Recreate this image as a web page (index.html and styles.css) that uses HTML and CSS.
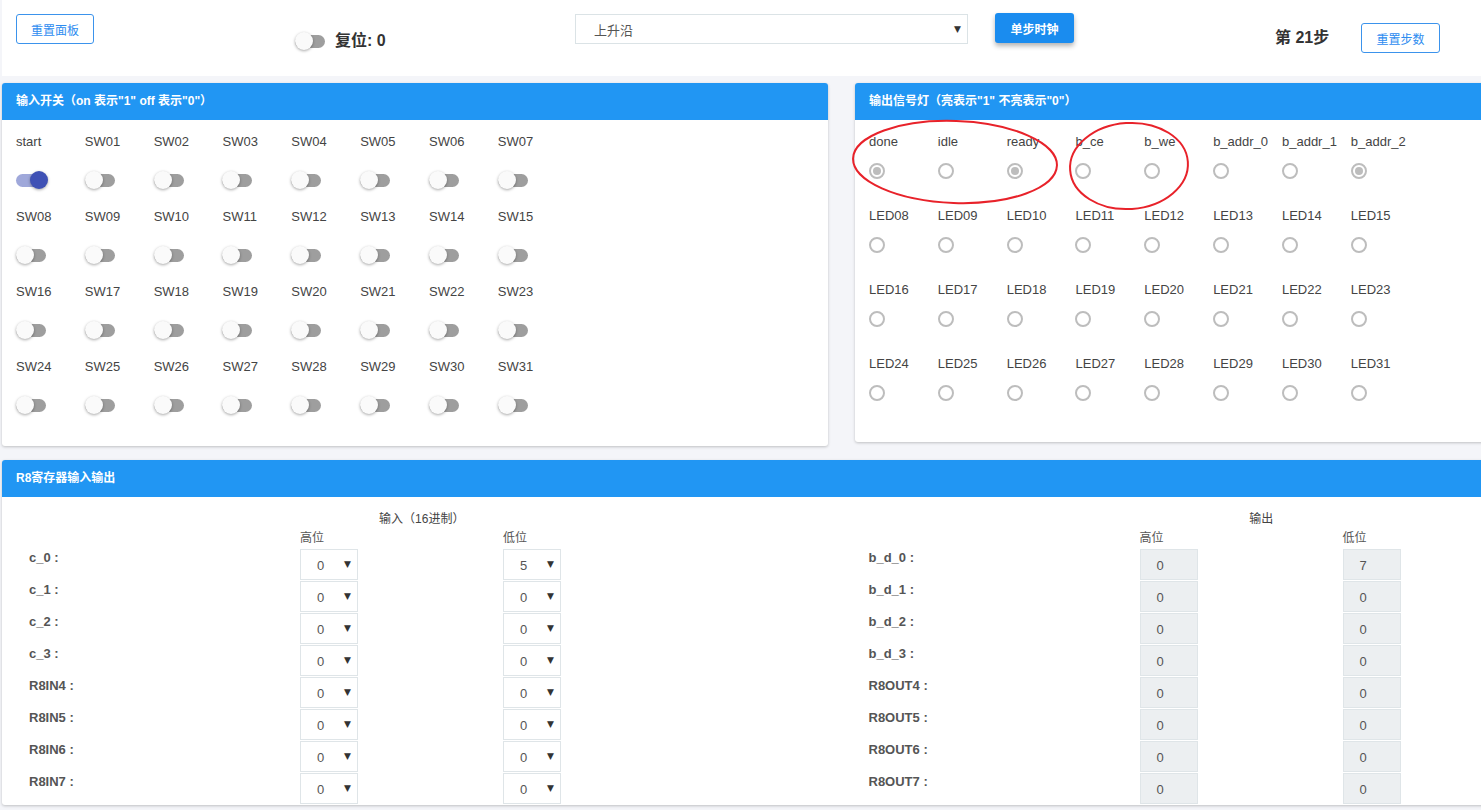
FILE: index.html
```html
<!DOCTYPE html>
<html lang="zh-CN">
<head>
<meta charset="utf-8">
<title>面板</title>
<link rel="stylesheet" href="styles.css">
</head>
<body>
<div class="page">
  <div class="topbar">
    <button class="btn-outline btn-reset-panel">重置面板</button>
    <div class="reset-group">
      <span class="sw"><i></i></span>
      <span class="reset-text">复位: 0</span>
    </div>
    <div class="top-select"><span>上升沿</span><b class="arrow">▼</b></div>
    <button class="btn-fill">单步时钟</button>
    <div class="step-text">第 21步</div>
    <button class="btn-outline btn-reset-step">重置步数</button>
  </div>

  <div class="panels">
    <section class="panel">
      <div class="panel-head">输入开关（on 表示"1" off 表示"0"）</div>
      <div class="grid sw-grid">
        <div class="cell"><span class="lbl">start</span><span class="sw on"><i></i></span></div>
        <div class="cell"><span class="lbl">SW01</span><span class="sw"><i></i></span></div>
        <div class="cell"><span class="lbl">SW02</span><span class="sw"><i></i></span></div>
        <div class="cell"><span class="lbl">SW03</span><span class="sw"><i></i></span></div>
        <div class="cell"><span class="lbl">SW04</span><span class="sw"><i></i></span></div>
        <div class="cell"><span class="lbl">SW05</span><span class="sw"><i></i></span></div>
        <div class="cell"><span class="lbl">SW06</span><span class="sw"><i></i></span></div>
        <div class="cell"><span class="lbl">SW07</span><span class="sw"><i></i></span></div>
        <div class="cell"><span class="lbl">SW08</span><span class="sw"><i></i></span></div>
        <div class="cell"><span class="lbl">SW09</span><span class="sw"><i></i></span></div>
        <div class="cell"><span class="lbl">SW10</span><span class="sw"><i></i></span></div>
        <div class="cell"><span class="lbl">SW11</span><span class="sw"><i></i></span></div>
        <div class="cell"><span class="lbl">SW12</span><span class="sw"><i></i></span></div>
        <div class="cell"><span class="lbl">SW13</span><span class="sw"><i></i></span></div>
        <div class="cell"><span class="lbl">SW14</span><span class="sw"><i></i></span></div>
        <div class="cell"><span class="lbl">SW15</span><span class="sw"><i></i></span></div>
        <div class="cell"><span class="lbl">SW16</span><span class="sw"><i></i></span></div>
        <div class="cell"><span class="lbl">SW17</span><span class="sw"><i></i></span></div>
        <div class="cell"><span class="lbl">SW18</span><span class="sw"><i></i></span></div>
        <div class="cell"><span class="lbl">SW19</span><span class="sw"><i></i></span></div>
        <div class="cell"><span class="lbl">SW20</span><span class="sw"><i></i></span></div>
        <div class="cell"><span class="lbl">SW21</span><span class="sw"><i></i></span></div>
        <div class="cell"><span class="lbl">SW22</span><span class="sw"><i></i></span></div>
        <div class="cell"><span class="lbl">SW23</span><span class="sw"><i></i></span></div>
        <div class="cell"><span class="lbl">SW24</span><span class="sw"><i></i></span></div>
        <div class="cell"><span class="lbl">SW25</span><span class="sw"><i></i></span></div>
        <div class="cell"><span class="lbl">SW26</span><span class="sw"><i></i></span></div>
        <div class="cell"><span class="lbl">SW27</span><span class="sw"><i></i></span></div>
        <div class="cell"><span class="lbl">SW28</span><span class="sw"><i></i></span></div>
        <div class="cell"><span class="lbl">SW29</span><span class="sw"><i></i></span></div>
        <div class="cell"><span class="lbl">SW30</span><span class="sw"><i></i></span></div>
        <div class="cell"><span class="lbl">SW31</span><span class="sw"><i></i></span></div>
      </div>
    </section>

    <section class="panel">
      <div class="panel-head">输出信号灯（亮表示"1" 不亮表示"0"）</div>
      <div class="grid led-grid">
        <div class="cell"><span class="lbl">done</span><span class="radio on"></span></div>
        <div class="cell"><span class="lbl">idle</span><span class="radio"></span></div>
        <div class="cell"><span class="lbl">ready</span><span class="radio on"></span></div>
        <div class="cell"><span class="lbl">b_ce</span><span class="radio"></span></div>
        <div class="cell"><span class="lbl">b_we</span><span class="radio"></span></div>
        <div class="cell"><span class="lbl">b_addr_0</span><span class="radio"></span></div>
        <div class="cell"><span class="lbl">b_addr_1</span><span class="radio"></span></div>
        <div class="cell"><span class="lbl">b_addr_2</span><span class="radio on"></span></div>
        <div class="cell"><span class="lbl">LED08</span><span class="radio"></span></div>
        <div class="cell"><span class="lbl">LED09</span><span class="radio"></span></div>
        <div class="cell"><span class="lbl">LED10</span><span class="radio"></span></div>
        <div class="cell"><span class="lbl">LED11</span><span class="radio"></span></div>
        <div class="cell"><span class="lbl">LED12</span><span class="radio"></span></div>
        <div class="cell"><span class="lbl">LED13</span><span class="radio"></span></div>
        <div class="cell"><span class="lbl">LED14</span><span class="radio"></span></div>
        <div class="cell"><span class="lbl">LED15</span><span class="radio"></span></div>
        <div class="cell"><span class="lbl">LED16</span><span class="radio"></span></div>
        <div class="cell"><span class="lbl">LED17</span><span class="radio"></span></div>
        <div class="cell"><span class="lbl">LED18</span><span class="radio"></span></div>
        <div class="cell"><span class="lbl">LED19</span><span class="radio"></span></div>
        <div class="cell"><span class="lbl">LED20</span><span class="radio"></span></div>
        <div class="cell"><span class="lbl">LED21</span><span class="radio"></span></div>
        <div class="cell"><span class="lbl">LED22</span><span class="radio"></span></div>
        <div class="cell"><span class="lbl">LED23</span><span class="radio"></span></div>
        <div class="cell"><span class="lbl">LED24</span><span class="radio"></span></div>
        <div class="cell"><span class="lbl">LED25</span><span class="radio"></span></div>
        <div class="cell"><span class="lbl">LED26</span><span class="radio"></span></div>
        <div class="cell"><span class="lbl">LED27</span><span class="radio"></span></div>
        <div class="cell"><span class="lbl">LED28</span><span class="radio"></span></div>
        <div class="cell"><span class="lbl">LED29</span><span class="radio"></span></div>
        <div class="cell"><span class="lbl">LED30</span><span class="radio"></span></div>
        <div class="cell"><span class="lbl">LED31</span><span class="radio"></span></div>
      </div>
    </section>
  </div>

  <section class="panel panel-wide">
    <div class="panel-head">R8寄存器输入输出</div>
    <div class="reg-body">
      <div class="half">
        <div class="half-title">输入（16进制）</div>
        <div class="reg-row reg-head"><span></span><span>高位</span><span></span><span>低位</span></div>
        <div class="reg-row"><span class="reg-lbl">c_0 :</span><span class="sel">0<b class="arrow">▼</b></span><span></span><span class="sel">5<b class="arrow">▼</b></span></div>
        <div class="reg-row"><span class="reg-lbl">c_1 :</span><span class="sel">0<b class="arrow">▼</b></span><span></span><span class="sel">0<b class="arrow">▼</b></span></div>
        <div class="reg-row"><span class="reg-lbl">c_2 :</span><span class="sel">0<b class="arrow">▼</b></span><span></span><span class="sel">0<b class="arrow">▼</b></span></div>
        <div class="reg-row"><span class="reg-lbl">c_3 :</span><span class="sel">0<b class="arrow">▼</b></span><span></span><span class="sel">0<b class="arrow">▼</b></span></div>
        <div class="reg-row"><span class="reg-lbl">R8IN4 :</span><span class="sel">0<b class="arrow">▼</b></span><span></span><span class="sel">0<b class="arrow">▼</b></span></div>
        <div class="reg-row"><span class="reg-lbl">R8IN5 :</span><span class="sel">0<b class="arrow">▼</b></span><span></span><span class="sel">0<b class="arrow">▼</b></span></div>
        <div class="reg-row"><span class="reg-lbl">R8IN6 :</span><span class="sel">0<b class="arrow">▼</b></span><span></span><span class="sel">0<b class="arrow">▼</b></span></div>
        <div class="reg-row"><span class="reg-lbl">R8IN7 :</span><span class="sel">0<b class="arrow">▼</b></span><span></span><span class="sel">0<b class="arrow">▼</b></span></div>
      </div>
      <div class="half">
        <div class="half-title">输出</div>
        <div class="reg-row reg-head"><span></span><span>高位</span><span></span><span>低位</span></div>
        <div class="reg-row"><span class="reg-lbl">b_d_0 :</span><span class="out">0</span><span></span><span class="out">7</span></div>
        <div class="reg-row"><span class="reg-lbl">b_d_1 :</span><span class="out">0</span><span></span><span class="out">0</span></div>
        <div class="reg-row"><span class="reg-lbl">b_d_2 :</span><span class="out">0</span><span></span><span class="out">0</span></div>
        <div class="reg-row"><span class="reg-lbl">b_d_3 :</span><span class="out">0</span><span></span><span class="out">0</span></div>
        <div class="reg-row"><span class="reg-lbl">R8OUT4 :</span><span class="out">0</span><span></span><span class="out">0</span></div>
        <div class="reg-row"><span class="reg-lbl">R8OUT5 :</span><span class="out">0</span><span></span><span class="out">0</span></div>
        <div class="reg-row"><span class="reg-lbl">R8OUT6 :</span><span class="out">0</span><span></span><span class="out">0</span></div>
        <div class="reg-row"><span class="reg-lbl">R8OUT7 :</span><span class="out">0</span><span></span><span class="out">0</span></div>
      </div>
    </div>
  </section>
</div>

<svg class="annot" width="1481" height="810" viewBox="0 0 1481 810">
  <ellipse cx="955" cy="162" rx="102" ry="41" transform="rotate(2 955 162)" />
  <ellipse cx="1129" cy="166" rx="59" ry="43" transform="rotate(-4 1129 166)" />
</svg>
</body>
</html>
```

FILE: styles.css
```css
html, body {
  margin: 0;
  padding: 0;
  height: 100%;
  overflow: hidden;
}
body {
  background: #f4f5f9;
  font-family: "Liberation Sans", "Noto Sans CJK SC", sans-serif;
  font-size: 13px;
  color: #333;
}
.page {
  width: 1679px;
  margin-left: 2px;
}

/* top bar */
.topbar {
  background: #fff;
  height: 76px;
  display: flex;
  align-items: flex-start;
}
.btn-outline {
  font-family: "Liberation Sans", "Noto Sans CJK SC", sans-serif;
  font-size: 12px;
  color: #2d8cf0;
  background: #fff;
  border: 1px solid #3b93ec;
  border-radius: 3px;
  height: 30px;
  width: 78px;
  padding: 0;
}
.btn-reset-panel {
  margin-left: 14px;
  margin-top: 14px;
}
.reset-group {
  margin-left: 201px;
  width: 280px;
  height: 18px;
  margin-top: 32px;
  display: flex;
  align-items: center;
  gap: 8px;
}
.reset-text {
  font-size: 16px;
  font-weight: 700;
  line-height: 18px;
  color: #333;
}
.top-select {
  position: relative;
  width: 393px;
  height: 30px;
  margin-top: 14px;
  box-sizing: border-box;
  border: 1px solid #dbe3e6;
  background: #fff;
  display: flex;
  align-items: center;
  padding-left: 18px;
  color: #555;
  font-size: 13px;
}
.arrow {
  position: absolute;
  font-size: 9px;
  font-weight: 400;
  color: #333;
  font-family: "DejaVu Sans", sans-serif;
  top: 50%;
  transform: translateY(-50%);
}
.top-select .arrow {
  right: 6px;
}
.btn-fill {
  margin-left: 27px;
  margin-top: 13px;
  width: 79px;
  height: 30px;
  border: none;
  border-radius: 3px;
  background: #1a8cef;
  color: #fff;
  font-family: "Liberation Sans", "Noto Sans CJK SC", sans-serif;
  font-size: 12px;
  font-weight: 700;
  box-shadow: 0 3px 5px rgba(0, 0, 0, 0.3);
  padding: 0;
}
.step-text {
  margin-left: 201px;
  width: 86px;
  margin-top: 28px;
  font-size: 16px;
  font-weight: 700;
  line-height: 20px;
  color: #333;
}
.btn-reset-step {
  margin-top: 23px;
  width: 79px;
}

/* toggle switch */
.sw {
  position: relative;
  display: block;
  width: 32px;
  height: 18px;
  flex: none;
}
.sw::before {
  content: "";
  position: absolute;
  left: 0;
  top: 3px;
  width: 30px;
  height: 13px;
  border-radius: 7px;
  background: #9e9e9e;
}
.sw i {
  position: absolute;
  left: 0;
  top: 0;
  width: 18px;
  height: 18px;
  border-radius: 50%;
  background: #fafafa;
  box-shadow: 0 1px 3px rgba(0, 0, 0, 0.35);
}
.sw.on::before {
  background: #9fa8da;
}
.sw.on i {
  left: 14px;
  background: #3f51b5;
}

/* panels */
.panels {
  display: flex;
  gap: 27px;
  margin-top: 7px;
  align-items: flex-start;
}
.panel {
  width: 826px;
  background: #fff;
  border-radius: 3px;
  box-shadow: 0 1px 3px rgba(0, 0, 0, 0.22);
  overflow: hidden;
}
.panel-head {
  height: 37px;
  line-height: 37px;
  background: #2196f3;
  color: #fff;
  padding-left: 14px;
  font-size: 12px;
  font-weight: 700;
}
.grid {
  display: grid;
  grid-template-columns: repeat(8, 68.83px);
  padding-left: 14px;
  padding-top: 14px;
}
.sw-grid {
  padding-bottom: 12px;
}
.led-grid {
  padding-bottom: 12px;
}
.cell {
  display: flex;
  flex-direction: column;
  align-items: flex-start;
}
.sw-grid .cell {
  height: 75px;
}
.led-grid .cell {
  height: 74px;
}
.lbl {
  line-height: 16px;
  font-size: 13px;
  color: #444;
}
.sw-grid .sw {
  margin-top: 21px;
}
.radio {
  margin-top: 13px;
  width: 16px;
  height: 16px;
  box-sizing: border-box;
  border: 2px solid #bdbdbd;
  border-radius: 50%;
  display: flex;
  align-items: center;
  justify-content: center;
}
.radio.on::after {
  content: "";
  width: 8px;
  height: 8px;
  border-radius: 50%;
  background: #bdbdbd;
}

/* register panel */
.panel-wide {
  width: 1679px;
  margin-top: 14px;
}
.reg-body {
  display: grid;
  grid-template-columns: 1fr 1fr;
  padding-top: 14px;
}
.half-title {
  text-align: center;
  line-height: 16px;
  font-size: 12px;
  color: #444;
  margin-bottom: 3px;
}
.reg-row {
  display: grid;
  grid-template-columns: 271px 58px 145px 58px;
  padding-left: 27px;
  height: 31px;
  margin-bottom: 1px;
}
.reg-head {
  height: 16px;
  line-height: 16px;
  margin-bottom: 3px;
  font-size: 12px;
  color: #555;
}
.reg-lbl {
  line-height: 16px;
  margin-top: 1px;
  font-size: 13px;
  font-weight: 700;
  color: #555;
}
.sel,
.out {
  position: relative;
  box-sizing: border-box;
  height: 31px;
  border: 1px solid #dfe5e8;
  display: flex;
  align-items: center;
  padding-left: 16px;
  padding-top: 2px;
  font-size: 13px;
  color: #555;
}
.sel {
  background: #fff;
}
.sel .arrow {
  right: 6px;
  margin-top: -1px;
}
.out {
  background: #eceff1;
}

/* annotation overlay */
.annot {
  position: absolute;
  left: 0;
  top: 0;
  pointer-events: none;
}
.annot ellipse {
  fill: none;
  stroke: #e8222a;
  stroke-width: 2;
}
```
